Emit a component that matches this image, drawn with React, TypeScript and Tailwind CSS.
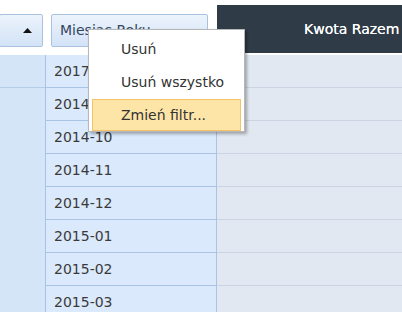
import React from "react";

const months = [
  "2017",
  "2014",
  "2014-10",
  "2014-11",
  "2014-12",
  "2015-01",
  "2015-02",
  "2015-03",
];

const menuItems = ["Usuń", "Usuń wszystko", "Zmień filtr..."];

function HeaderButton({
  className,
  children,
}: {
  className: string;
  children?: React.ReactNode;
}) {
  return (
    <div
      className={`h-[33px] flex items-center border border-[#a9c2e0] rounded-[2px] bg-gradient-to-b from-[#ecf3fc] to-[#d3e3f7] ${className}`}
    >
      {children}
    </div>
  );
}

export default function App() {
  return (
    <div
      className="relative w-[402px] h-[312px] overflow-hidden bg-white"
      style={{ fontFamily: '"DejaVu Sans", Verdana, sans-serif' }}
    >
      {/* nagłówki */}
      <div className="flex h-[55px]">
        <div className="w-[217px] flex items-start pt-[14px]">
          <HeaderButton className="w-[44px] -ml-px justify-end pr-[10px]">
            <svg width="9" height="5" viewBox="0 0 9 5">
              <path d="M4.5 0 L9 5 L0 5 Z" fill="#111" />
            </svg>
          </HeaderButton>
          <HeaderButton className="w-[157px] ml-[8px] pl-[8px]">
            <span className="text-[14px] text-[#34465e] whitespace-nowrap">
              Miesiąc Roku
            </span>
          </HeaderButton>
        </div>
        <div className="flex-1 mt-[5px] h-[48px] bg-[#2f3b47] flex items-center pl-[87px] overflow-hidden">
          <span className="text-[14px] text-white whitespace-nowrap [text-shadow:0_0_0.4px_#fff]">
            Kwota Razem
          </span>
        </div>
      </div>

      {/* wiersze */}
      <div className="flex">
        <div className="w-[46px] flex flex-col border-r border-[#a9c3e5] bg-[#d4e5f8]">
          <div className="h-[33px] border-b border-[#b6cdea]" />
          <div className="flex-1" />
        </div>
        <div className="w-[171px] flex flex-col">
          {months.map((m) => (
            <div
              key={m}
              className="h-[33px] flex items-center pl-[8px] bg-[#dae9fb] border-b border-r border-[#a9c3e5] text-[14px] text-[#3a3a3a]"
            >
              {m}
            </div>
          ))}
        </div>
        <div className="flex-1 flex flex-col">
          {months.map((m) => (
            <div
              key={m}
              className="h-[33px] bg-[#e2e8f1] border-b border-[#cbd4e2]"
            />
          ))}
        </div>
      </div>

      {/* menu kontekstowe */}
      <div className="absolute left-[88px] top-[29px] w-[157px] bg-white border border-[#b7b7b7] shadow-[2px_2px_3px_rgba(0,0,0,0.3)] px-[3px] pt-[3px] flex flex-col gap-[1px]">
        {menuItems.map((item, i) => (
          <div
            key={item}
            className={`h-[32px] flex items-center pl-[28px] text-[14px] text-[#333] border ${
              i === 2
                ? "bg-[#fde5a8] border-[#f3c26a]"
                : "border-transparent"
            }`}
          >
            {item}
          </div>
        ))}
      </div>
    </div>
  );
}
